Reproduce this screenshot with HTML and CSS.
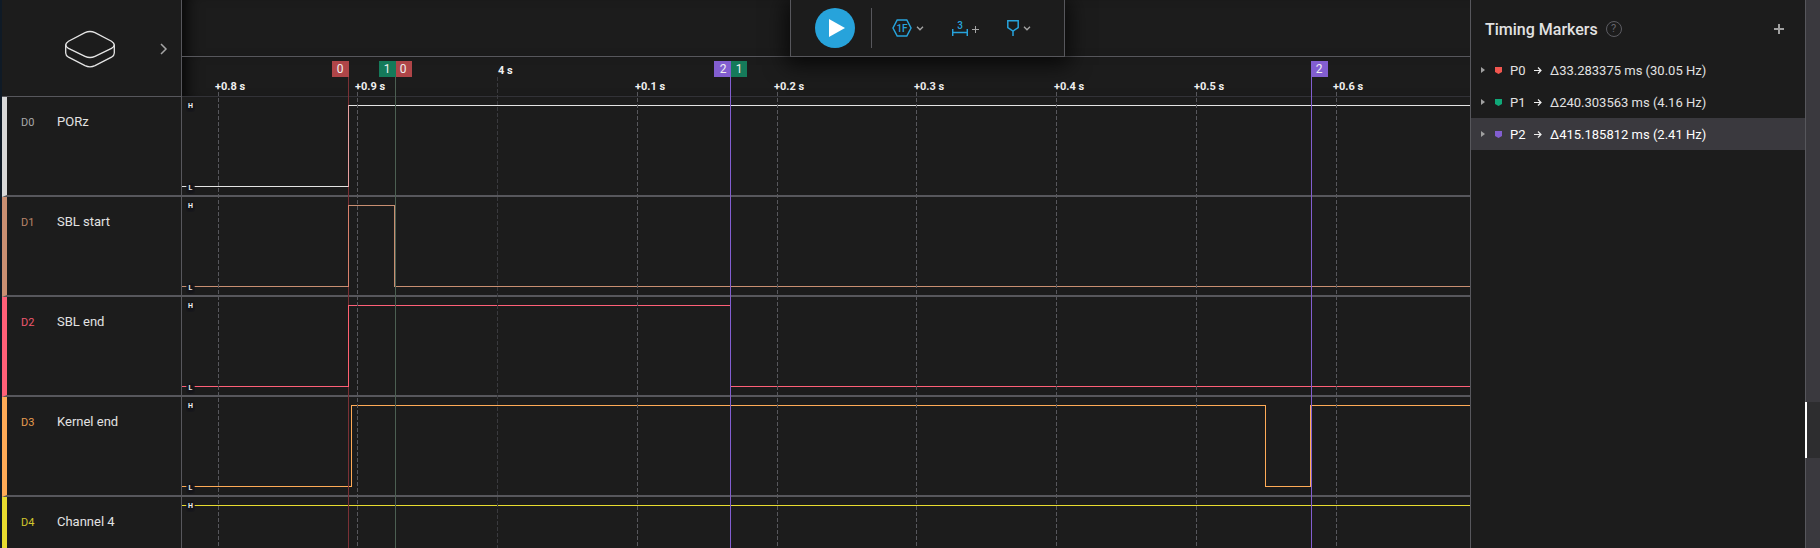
FILE: index.html
```html
<!DOCTYPE html>
<html lang="en">
<head>
<meta charset="utf-8">
<title>Logic capture</title>
<link rel="stylesheet" href="styles.css">
</head>
<body>
<div class="app">
  <aside class="channels">
    <header class="device">
      <svg class="device-logo" width="52" height="40" viewBox="0 0 52 40" fill="none" stroke="#e4e4e4" stroke-width="1.3">
        <path d="M21 3.6Q26 1.4 31 3.6L47.500 12.200Q53 16 47.500 19.400L31 27.300Q26 29.700 21 27.300L4.500 19.400Q-1 16 4.500 12.200Z"/>
        <path d="M1.700 15.500V24Q1.700 26.500 4.500 28.200L21 36.600Q26 39 31 36.600L47.500 28.200Q50.300 26.500 50.300 24V15.500"/>
      </svg>
      <button class="expand" type="button" aria-label="Expand device">
        <svg width="8" height="12" viewBox="0 0 8 12" fill="none" stroke="#a5a5a5" stroke-width="1.5"><path d="M1 1l5 5-5 5"/></svg>
      </button>
    </header>
    <div class="channel c0"><span class="id">D0</span><span class="name">PORz</span></div>
    <div class="channel c1"><span class="id">D1</span><span class="name">SBL start</span></div>
    <div class="channel c2"><span class="id">D2</span><span class="name">SBL end</span></div>
    <div class="channel c3"><span class="id">D3</span><span class="name">Kernel end</span></div>
    <div class="channel c4"><span class="id">D4</span><span class="name">Channel 4</span></div>
  </aside>

  <main class="plot">
    <div class="plot-top"></div>
    <div class="ruler"></div>
    <div class="track c0"><svg class="wave"><path d="M0 89.500H166.500V8.500H6000"/></svg><span class="level">H</span><span class="level">L</span></div>
    <div class="track c1"><svg class="wave"><path d="M0 89.500H166.500V8.500H212.500V89.500H6000"/></svg><span class="level">H</span><span class="level">L</span></div>
    <div class="track c2"><svg class="wave"><path d="M0 89.500H166.500V8.500H548.500V89.500H6000"/></svg><span class="level">H</span><span class="level">L</span></div>
    <div class="track c3"><svg class="wave"><path d="M0 89.500H169.500V8.500H1083.500V89.500H1128.500V8.500H6000"/></svg><span class="level">H</span><span class="level">L</span></div>
    <div class="track c4"><svg class="wave"><path d="M0 8.500H6000"/></svg><span class="level">H</span></div>

    <svg class="overlay">
      <g class="grid">
        <path d="M36.500 92V2000M175.500 92V2000M455.500 92V2000M595.500 92V2000M734.500 92V2000M874.500 92V2000M1014.500 92V2000M1154.500 92V2000"/>
        <path class="major" d="M315.500 77V2000"/>
      </g>
      <g class="ticks">
        <text x="33" y="90">+0.8 s</text><text x="173" y="90">+0.9 s</text>
        <text x="453" y="90">+0.1 s</text><text x="592" y="90">+0.2 s</text>
        <text x="732" y="90">+0.3 s</text><text x="872" y="90">+0.4 s</text>
        <text x="1012" y="90">+0.5 s</text><text x="1151" y="90">+0.6 s</text>
        <text x="316" y="74">4 s</text>
      </g>
      <g class="markers">
        <path d="M166.500 77V2000" stroke="#7a3035"/>
        <path d="M213.500 77V2000" stroke="#4c5f52"/>
        <path d="M548.500 77V2000" stroke="#825ed0"/>
        <path d="M1129.500 77V2000" stroke="#825ed0"/>
        <path d="M166.500 105V187" stroke="#e8a0a0"/>
        <path d="M166.500 205V287" stroke="#d9806c"/>
        <path d="M166.500 305V387" stroke="#ff6070"/>
        <rect x="150" y="61" width="17" height="16" fill="#af4548"/>
        <rect x="197" y="61" width="17" height="16" fill="#157a5a"/>
        <rect x="214" y="61" width="16" height="16" fill="#af4548"/>
        <rect x="532" y="61" width="17" height="16" fill="#825ed0"/>
        <rect x="549" y="61" width="16" height="16" fill="#157a5a"/>
        <rect x="1129" y="61" width="17" height="16" fill="#825ed0"/>
        <text x="158" y="73">0</text><text x="205" y="73">1</text><text x="221" y="73">0</text>
        <text x="541" y="73">2</text><text x="557" y="73">1</text><text x="1137" y="73">2</text>
      </g>
    </svg>
  </main>

  <aside class="panel">
    <header class="panel-head">
      <h1>Timing Markers</h1>
      <button class="help" type="button" aria-label="Help">?</button>
      <button class="add" type="button" aria-label="Add marker">
        <svg width="10" height="10" stroke="#a0a0a0" stroke-width="2"><path d="M5 0V10M0 5H10"/></svg>
      </button>
    </header>
    <ul class="pairs">
      <li class="pair">
        <svg class="caret" width="4" height="6"><path d="M0 0L4 3L0 6Z"/></svg>
        <svg class="flag" width="7" height="7" fill="#f2564f"><path d="M0 0H7V5L3.500 7L0 5Z"/></svg>
        <span class="pid">P0</span>
        <svg class="arrow" width="8" height="7"><path d="M0 3.500H7M4 .5l3 3-3 3"/></svg>
        <span>Δ33.283375 ms (30.05 Hz)</span>
      </li>
      <li class="pair">
        <svg class="caret" width="4" height="6"><path d="M0 0L4 3L0 6Z"/></svg>
        <svg class="flag" width="7" height="7" fill="#10a878"><path d="M0 0H7V5L3.500 7L0 5Z"/></svg>
        <span class="pid">P1</span>
        <svg class="arrow" width="8" height="7"><path d="M0 3.500H7M4 .5l3 3-3 3"/></svg>
        <span>Δ240.303563 ms (4.16 Hz)</span>
      </li>
      <li class="pair selected">
        <svg class="caret" width="4" height="6"><path d="M0 0L4 3L0 6Z"/></svg>
        <svg class="flag" width="7" height="7" fill="#825ed0"><path d="M0 0H7V5L3.500 7L0 5Z"/></svg>
        <span class="pid">P2</span>
        <svg class="arrow" width="8" height="7"><path d="M0 3.500H7M4 .5l3 3-3 3"/></svg>
        <span>Δ415.185812 ms (2.41 Hz)</span>
      </li>
    </ul>
  </aside>
  <nav class="rail"><button class="rail-tab" type="button" aria-label="Timing markers"></button></nav>

  <div class="toolbar">
    <button class="play" type="button" aria-label="Start capture">
      <svg width="16" height="18" fill="#fff"><path d="M0 0L16 9L0 18Z"/></svg>
    </button>
    <span class="divider"></span>
    <div class="tools">
      <button class="tool" type="button" aria-label="Number format">
        <svg width="20" height="18" viewBox="0 0 20 18" fill="none" stroke="#27a3db" stroke-width="1.500"><path d="M5.200 1H14.800L19 9L14.800 17H5.200L1 9Z"/><text x="10" y="12.500" class="glyph">1F</text></svg>
        <svg width="8" height="5" fill="none" stroke="#a5a5a5" stroke-width="1.300"><path d="M1 .8L4 3.800L7 .8"/></svg>
      </button>
      <button class="tool" type="button" aria-label="Add measurement">
        <svg width="16" height="18" viewBox="0 0 16 18" fill="none" stroke="#27a3db" stroke-width="1.500"><path d="M.7 10V17M15.300 10V17M.7 13.500H15.300"/><text x="8" y="9.500" class="glyph">3</text></svg>
        <svg width="7" height="9" stroke="#a5a5a5"><path d="M3.500 2V9M0 5.500H7"/></svg>
      </button>
      <button class="tool" type="button" aria-label="Add marker">
        <svg width="12" height="16" viewBox="0 0 12 16" fill="none" stroke="#27a3db" stroke-width="1.500"><path d="M.8 .8H11.200V7.500L6 11L.8 7.500ZM6 11V16"/></svg>
        <svg width="8" height="5" fill="none" stroke="#a5a5a5" stroke-width="1.300"><path d="M1 .8L4 3.800L7 .8"/></svg>
      </button>
    </div>
  </div>
</div>
</body>
</html>
```
FILE: styles.css
```css
* { box-sizing: border-box; }
body { margin: 0; background: #1c1c1c; color: #e2e2e2; font-family: Roboto, "Liberation Sans", sans-serif; font-size: 13px; overflow: hidden; }
button { appearance: none; border: 0; padding: 0; background: none; color: inherit; font: inherit; }
svg { display: block; }

.app { position: relative; display: grid; grid-template-columns: 182px 1fr 336px 14px; height: 100vh; overflow: hidden; }

.channels { border-left: 2px solid #0f1a26; border-right: 1px solid #57575c; }
.device { display: flex; align-items: center; justify-content: space-between; height: 97px; padding: 2px 13px 0 62px; border-bottom: 1px solid #57575c; }
.expand { display: flex; }
.channel { display: flex; align-items: flex-start; height: 100px; padding: 16px 0 0 14px; line-height: 18px; border-bottom: 2px solid #57575c; border-left: 5px solid; }
.id { width: 36px; font-size: 11px; line-height: 19px; }
.name { color: #e2e2e2; }
.c0 { border-left-color: #d8d8d8; color: #a8a8a8; stroke: #e4e4e4; }
.c1 { border-left-color: #c98f72; color: #b98468; stroke: #c98f72; }
.c2 { border-left-color: #ff6078; color: #f0586e; stroke: #ff6078; }
.c3 { border-left-color: #ffab57; color: #e89c50; stroke: #ffab57; }
.c4 { border-left-color: #e8dc2f; color: #d2c62c; stroke: #e8dc2f; }

.plot { position: relative; overflow: hidden; }
.plot-top { height: 57px; border-bottom: 1px solid #57575c; box-shadow: inset 16px 0 18px -14px #000; }
.ruler { height: 40px; border-bottom: 1px solid #323237; box-shadow: inset 16px 0 18px -14px #000; }
.track { display: flex; flex-direction: column; justify-content: space-between; align-items: flex-start; position: relative; height: 100px; padding: 4px 0 1px 4px; border-bottom: 2px solid #57575c; }
.wave { position: absolute; inset: 0; width: 100%; height: 100%; fill: none; stroke-width: 1px; shape-rendering: crispEdges; }
.level { position: relative; width: 9px; text-align: center; line-height: 11px; font-size: 7px; font-weight: 700; color: #eee; background: radial-gradient(#15151a 50%, transparent); }
.overlay { position: absolute; inset: 0; width: 100%; height: 100%; }
.grid { stroke: #57575c; stroke-dasharray: 4 2; shape-rendering: crispEdges; }
.major { stroke: #3a3a3e; }
.ticks { fill: #f0f0f0; font-size: 11px; font-weight: 700; }
.markers { fill: #f0f0f0; font-size: 12px; text-anchor: middle; }

.panel { border-left: 1px solid #57575c; border-right: 1px solid #57575c; }
.panel-head { display: flex; align-items: center; height: 54px; padding: 4px 21px 0 14px; }
.panel-head h1 { margin: 0; font-size: 16px; font-weight: 500; }
.help { width: 16px; height: 16px; margin-left: 8px; border: 1px solid #5c5c62; border-radius: 50%; color: #66666c; font-size: 11px; line-height: 14px; }
.add { margin-left: auto; }
.pairs { margin: 0; padding: 0; list-style: none; }
.pair { display: flex; align-items: center; height: 32px; padding-left: 10px; white-space: nowrap; }
.selected { background: #3a393e; color: #fff; }
.caret { fill: #a0a0a0; margin-right: 10px; }
.flag { margin-right: 8px; }
.pid { width: 24px; }
.arrow { fill: none; stroke: #eee; stroke-width: 1.2; margin-right: 8px; }

.rail { padding-top: 402px; background: #3a393e; }
.rail-tab { display: block; width: 15px; height: 56px; margin-left: -1px; background: #2d2d2f; border-left: 2px solid #fff; }

.toolbar { position: absolute; top: 0; left: calc(50% - 120px); display: flex; align-items: center; width: 275px; height: 57px; padding: 0 31px 0 24px; background: #1c1c1c; border: 1px solid #57575c; border-top: 0; box-shadow: 0 4px 20px 4px #000000b0; }
.play { display: flex; align-items: center; justify-content: center; width: 40px; height: 40px; padding-left: 4px; border-radius: 50%; background: #27a3db; }
.divider { width: 1px; height: 40px; margin: 0 20px 0 16px; background: #57575c; }
.tools { display: flex; align-items: center; gap: 28px; }
.tool { display: flex; align-items: center; gap: 4px; }
.glyph { fill: #27a3db; stroke: none; font-size: 10px; font-weight: 500; text-anchor: middle; }
```
